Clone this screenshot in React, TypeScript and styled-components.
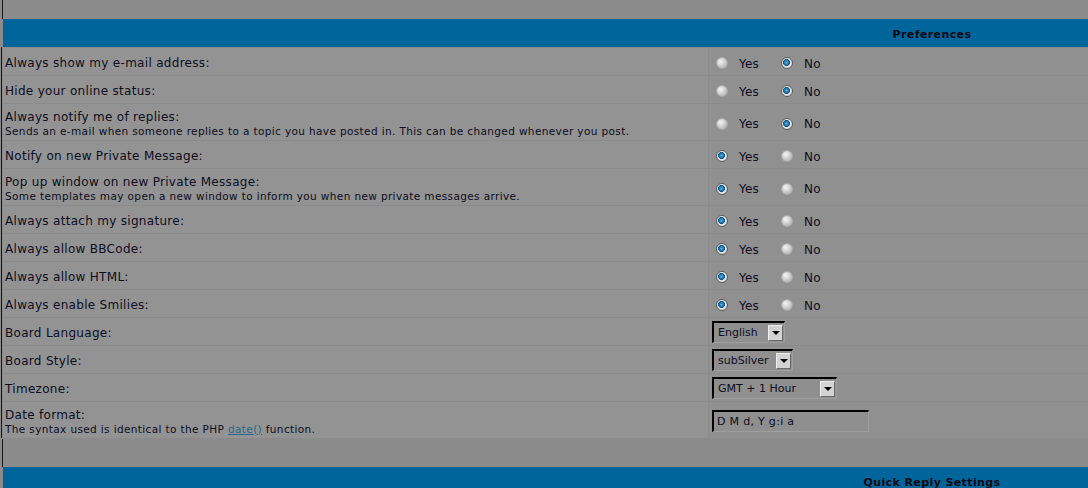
import React from 'react';
import styled, { createGlobalStyle } from 'styled-components';

const GlobalStyle = createGlobalStyle`
    html, body {
        margin: 0;
        padding: 0;
        background: #8b8b8b;
        overflow: hidden;
    }
`;

const TABLE_WIDTH = 1858;

const StyledPage = styled.div`
    display: flex;
    flex-direction: column;
    width: ${TABLE_WIDTH + 3}px;
    font-family: 'DejaVu Sans', Verdana, sans-serif;
    color: #0d0d1e;
`;

const StyledStrip = styled.div`
    height: 19px;
    margin-left: 2px;
    border-left: 1px solid #161616;
`;

const StyledBottomStrip = styled(StyledStrip)`
    height: 28px;
    margin-top: 1px;
`;

const StyledHeader = styled.div`
    display: flex;
    align-items: center;
    justify-content: center;
    box-sizing: border-box;
    height: 28px;
    padding-top: 2px;
    margin-left: 3px;
    width: ${TABLE_WIDTH}px;
    background: #00659a;
    color: #0a0a14;
    font-size: 11px;
    font-weight: bold;
    letter-spacing: 0.4px;
`;

const StyledBody = styled.div`
    display: flex;
    flex-direction: column;
    margin-left: 1px;
    padding-left: 1px;
    border-left: 1px solid #161616;
`;

const StyledRow = styled.div<{ $tall?: boolean }>`
    display: grid;
    grid-template-columns: 705px 1fr;
    column-gap: 1px;
    width: ${TABLE_WIDTH}px;
    height: ${({ $tall }) => ($tall ? 36 : 27)}px;
    margin-top: 1px;
`;

const StyledLabelCell = styled.div`
    display: flex;
    flex-direction: column;
    justify-content: center;
    box-sizing: border-box;
    padding: 3px 0 0 2px;
    background: #939393;
`;

const StyledLabel = styled.span`
    font-size: 12px;
    line-height: 15px;
    letter-spacing: 0.3px;
`;

const StyledExplain = styled.span`
    font-size: 10.5px;
    line-height: 13px;
    letter-spacing: 0.37px;
`;

const StyledLink = styled.a`
    color: #236990;
    text-decoration: underline;
`;

const StyledFieldCell = styled.div`
    display: flex;
    align-items: center;
    box-sizing: border-box;
    padding: 1px 0 0 3px;
    background: #909090;
`;

const StyledRadio = styled.span<{ $checked?: boolean }>`
    display: inline-block;
    box-sizing: border-box;
    width: 12px;
    height: 12px;
    margin: 2px 11px 0 4px;
    border-radius: 50%;
    border: 1px solid ${({ $checked }) => ($checked ? '#5c5c5c' : '#a9a9a9')};
    background: ${({ $checked }) =>
        $checked
            ? 'radial-gradient(circle at 45% 45%, #6fb6e6 0, #2a7fb8 1.6px, #145a8a 3.2px, #e9e9e9 3.8px, #d2d2d2 6px)'
            : 'radial-gradient(circle at 38% 35%, #f4f4f4 0, #dadada 3px, #bdbdbd 6px)'};
`;

const StyledOption = styled.span`
    margin-top: 3px;
    font-size: 12px;
    letter-spacing: 0.2px;

    & + ${StyledRadio} {
        margin-left: 22px;
    }
`;

const StyledSelect = styled.div<{ $width: number }>`
    display: flex;
    align-items: center;
    justify-content: space-between;
    box-sizing: border-box;
    width: ${({ $width }) => $width}px;
    height: 22px;
    padding: 0 1px 0 4px;
    border-top: 2px solid #000;
    border-left: 2px solid #000;
    border-right: 1px solid #9e9e9e;
    border-bottom: 1px solid #9e9e9e;
    background: #8f8f8f;
    font-size: 11px;
`;

const StyledArrow = styled.span`
    display: flex;
    align-items: center;
    justify-content: center;
    box-sizing: border-box;
    width: 15px;
    height: 16px;
    background: #d3d3d3;
    border: 1px solid #efefef;
    border-right-color: #6a6a6a;
    border-bottom-color: #6a6a6a;

    &::after {
        content: '';
        border-left: 4px solid transparent;
        border-right: 4px solid transparent;
        border-top: 4px solid #000;
        margin-top: 1px;
    }
`;

const StyledInput = styled(StyledSelect)`
    padding-left: 3px;
    letter-spacing: 0.3px;
`;

interface YesNoProps {
    yes: boolean;
}

const YesNo: React.FC<YesNoProps> = ({ yes }) => (
    <StyledFieldCell>
        <StyledRadio $checked={yes} />
        <StyledOption>Yes</StyledOption>
        <StyledRadio $checked={!yes} />
        <StyledOption>No</StyledOption>
    </StyledFieldCell>
);

const toggles = [
    { label: 'Always show my e-mail address:', yes: false },
    { label: 'Hide your online status:', yes: false },
    {
        label: 'Always notify me of replies:',
        explain: 'Sends an e-mail when someone replies to a topic you have posted in. This can be changed whenever you post.',
        yes: false,
    },
    { label: 'Notify on new Private Message:', yes: true },
    {
        label: 'Pop up window on new Private Message:',
        explain: 'Some templates may open a new window to inform you when new private messages arrive.',
        yes: true,
    },
    { label: 'Always attach my signature:', yes: true },
    { label: 'Always allow BBCode:', yes: true },
    { label: 'Always allow HTML:', yes: true },
    { label: 'Always enable Smilies:', yes: true },
];

const selects = [
    { label: 'Board Language:', value: 'English', width: 73 },
    { label: 'Board Style:', value: 'subSilver', width: 81 },
    { label: 'Timezone:', value: 'GMT + 1 Hour', width: 125 },
];

export default function App() {
    return (
        <>
            <GlobalStyle />
            <StyledPage>
                <StyledStrip />
                <StyledHeader>Preferences</StyledHeader>
                <StyledBody>
                    {toggles.map((t) => (
                        <StyledRow key={t.label} $tall={!!t.explain}>
                            <StyledLabelCell>
                                <StyledLabel>{t.label}</StyledLabel>
                                {t.explain && <StyledExplain>{t.explain}</StyledExplain>}
                            </StyledLabelCell>
                            <YesNo yes={t.yes} />
                        </StyledRow>
                    ))}
                    {selects.map((s) => (
                        <StyledRow key={s.label}>
                            <StyledLabelCell>
                                <StyledLabel>{s.label}</StyledLabel>
                            </StyledLabelCell>
                            <StyledFieldCell>
                                <StyledSelect $width={s.width}>
                                    {s.value}
                                    <StyledArrow />
                                </StyledSelect>
                            </StyledFieldCell>
                        </StyledRow>
                    ))}
                    <StyledRow $tall>
                        <StyledLabelCell>
                            <StyledLabel>Date format:</StyledLabel>
                            <StyledExplain>
                                The syntax used is identical to the PHP <StyledLink href="#">date()</StyledLink> function.
                            </StyledExplain>
                        </StyledLabelCell>
                        <StyledFieldCell>
                            <StyledInput $width={157}>D M d, Y g:i a</StyledInput>
                        </StyledFieldCell>
                    </StyledRow>
                </StyledBody>
                <StyledBottomStrip />
                <StyledHeader>Quick Reply Settings</StyledHeader>
            </StyledPage>
        </>
    );
}
